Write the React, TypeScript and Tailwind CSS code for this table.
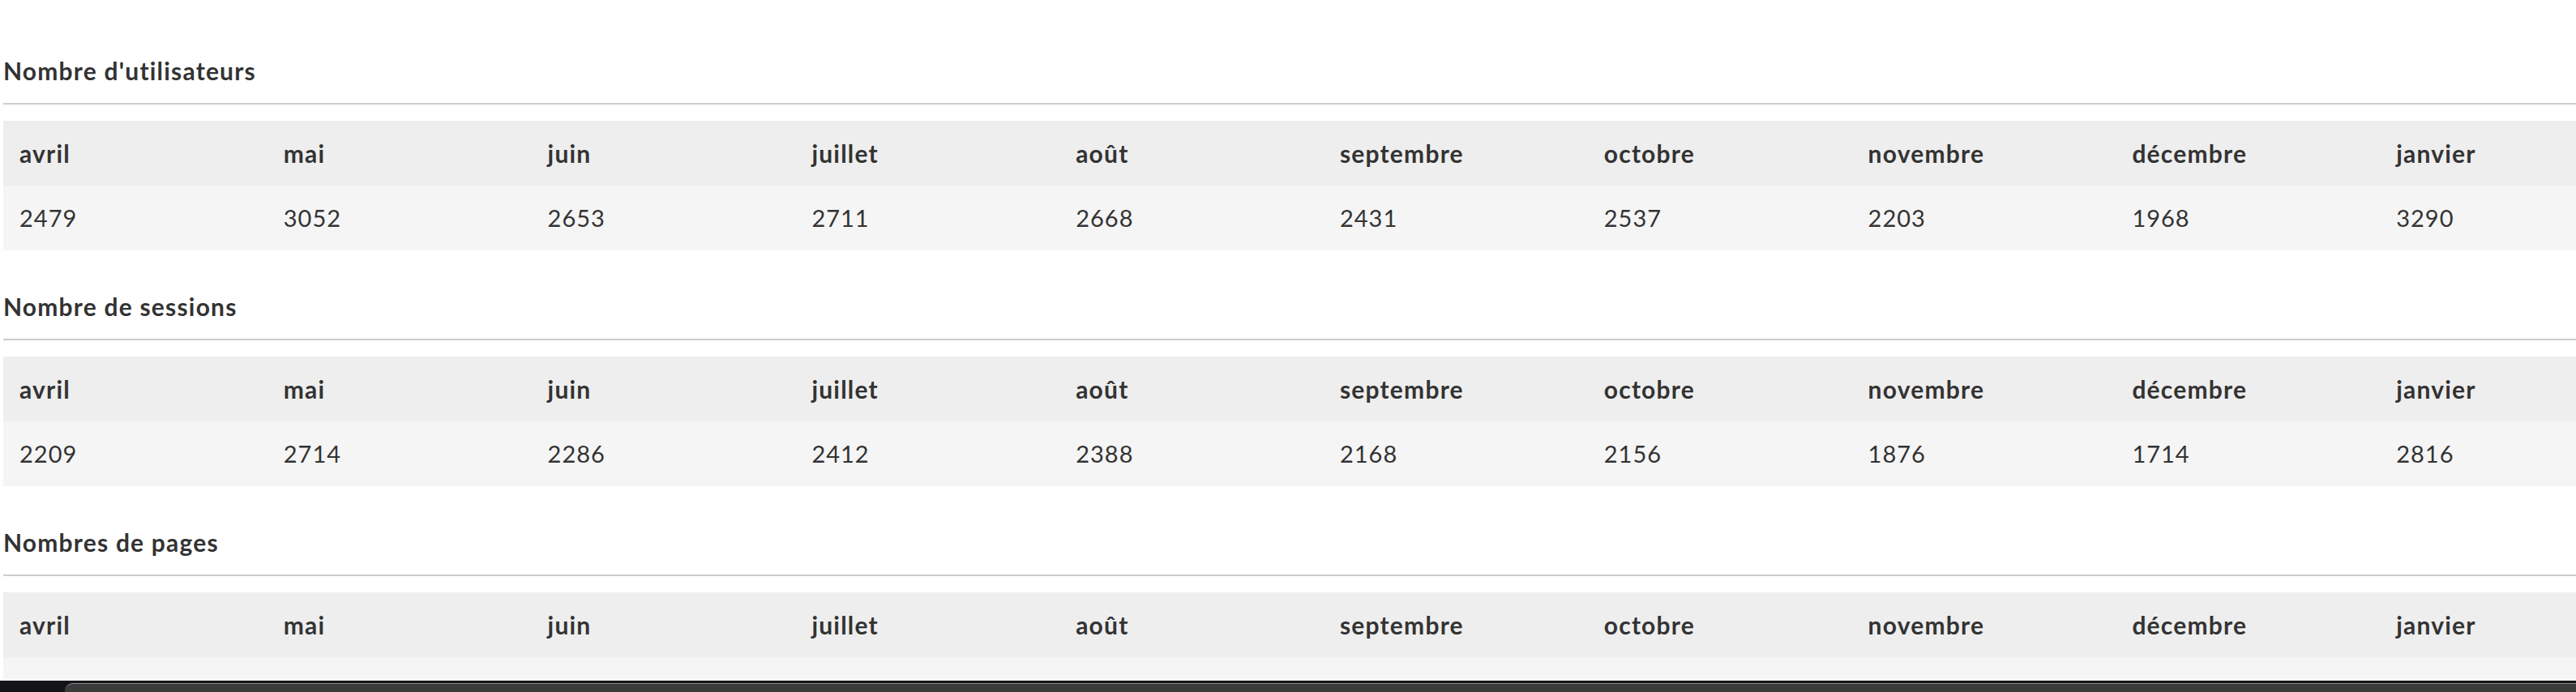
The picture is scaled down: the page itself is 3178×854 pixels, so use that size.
import React from 'react';

const months = ['avril', 'mai', 'juin', 'juillet', 'août', 'septembre', 'octobre', 'novembre', 'décembre', 'janvier'];

// the last table's values row sits under the window edge, so it stays empty here
const sections = [
  { title: "Nombre d'utilisateurs", values: ['2479', '3052', '2653', '2711', '2668', '2431', '2537', '2203', '1968', '3290'] },
  { title: 'Nombre de sessions', values: ['2209', '2714', '2286', '2412', '2388', '2168', '2156', '1876', '1714', '2816'] },
  { title: 'Nombres de pages', values: Array(10).fill('') as string[] },
];

function StatsTable({ title, values }: { title: string; values: string[] }) {
  return (
    <section>
      <h3 className="pt-[49px] pb-[20px] text-[30px] leading-[40px] font-bold text-[#333] tracking-[1.2px]">{title}</h3>
      <hr className="border-0 h-[2px] bg-[#cccccc]" />
      <div className="mt-[20px] grid grid-cols-[repeat(10,325.8px)]">
        {months.map((m) => (
          <div key={m} className="h-[80px] bg-[#eeeeee] px-[20px] flex items-center text-[30px] font-bold text-[#333] tracking-[1.2px]">
            {m}
          </div>
        ))}
        {values.map((v, i) => (
          <div key={i} className="h-[80px] bg-[#f5f5f5] px-[20px] flex items-center text-[29px] text-[#333] tracking-[1px]">
            {v}
          </div>
        ))}
      </div>
    </section>
  );
}

export default function App() {
  return (
    <div className="w-[3178px] h-[854px] overflow-hidden bg-white" style={{ fontFamily: 'Lato, "Open Sans", sans-serif' }}>
      <div className="h-[840px] overflow-hidden pt-[18px] pl-[4px]">
        {sections.map((s) => (
          <StatsTable key={s.title} title={s.title} values={s.values} />
        ))}
      </div>
      {/* bottom edge of a window behind */}
      <div className="h-[14px] bg-[#141518] pl-[80px] pt-[3px]">
        <div className="h-full bg-[#3b3b3b] border-t border-[#8a8a8a] rounded-tl-[10px]" />
      </div>
    </div>
  );
}
